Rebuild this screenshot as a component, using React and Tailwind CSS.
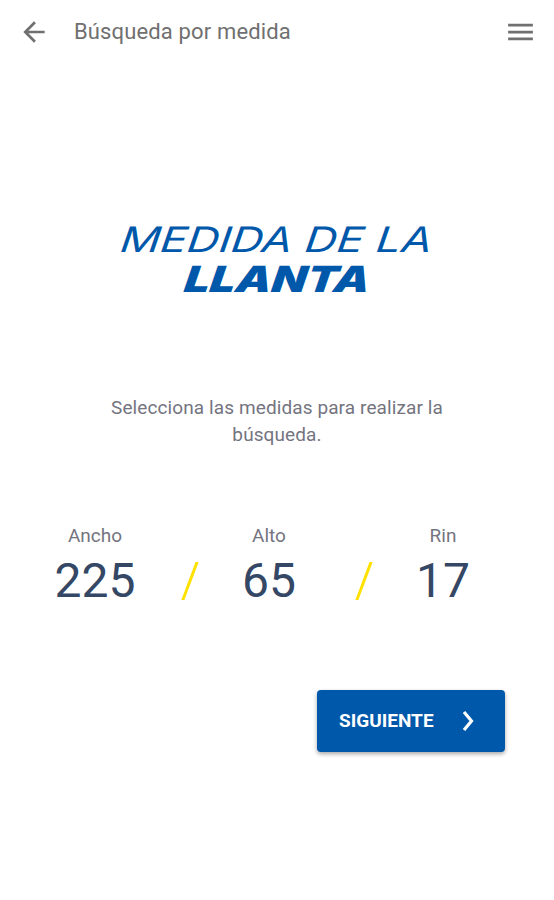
import React from 'react';

const measures = [
  { label: 'Ancho', value: '225' },
  { label: 'Alto', value: '65' },
  { label: 'Rin', value: '17' },
];

function Header() {
  return (
    <header className="h-16 pl-[18px] pr-[17px] flex items-center justify-between text-[#707070]">
      <div className="flex items-center">
        <button aria-label="Regresar">
          <svg className="w-8 h-8" viewBox="0 0 24 24" fill="currentColor">
            <path d="M20 11H7.83l5.59-5.59L12 4l-8 8 8 8 1.41-1.41L7.83 13H20v-2z" />
          </svg>
        </button>
        <span className="ml-6 text-[22px] leading-8 tracking-[0.14px] whitespace-nowrap">Búsqueda por medida</span>
      </div>
      <button aria-label="Menú">
        <svg className="w-[33px] h-[34px]" viewBox="0 0 24 24" fill="currentColor">
          <path d="M3 18h18v-2H3v2zm0-5h18v-2H3v2zm0-7v2h18V6H3z" />
        </svg>
      </button>
    </header>
  );
}

function Slash() {
  return (
    <svg className="w-[18px] h-[38px] mt-[38px] -mr-2 ml-2" viewBox="0 0 18 38">
      <path d="M14.5 0h3.2L3.4 38H0.3z" fill="#ffe100" />
    </svg>
  );
}

function Measure({ label, value }) {
  return (
    <div className="w-24 flex flex-col items-center">
      <span className="text-[19px] leading-6 text-[#747480]">{label}</span>
      <span className="mt-[5px] text-[48px] leading-[56px] text-[#344765]">{value}</span>
    </div>
  );
}

function App() {
  return (
    <div className="w-full h-[900px] bg-white font-['Roboto',sans-serif] overflow-hidden">
      <Header />

      <h1 className="mt-[155px] flex flex-col items-center font-['Inter',sans-serif] italic text-[#0058aa] whitespace-nowrap">
        <span className="text-[35px] leading-10 font-normal -skew-x-6 scale-x-[1.27]">MEDIDA DE LA</span>
        <span className="ml-0.5 text-[36px] leading-10 font-black -skew-x-6 scale-x-[1.26]">LLANTA</span>
      </h1>

      <p className="mt-[95px] w-[360px] mx-auto text-center text-[19px] leading-[27px] tracking-[0.1px] text-[#747480]">
        Selecciona las medidas para realizar la búsqueda.
      </p>

      <div className="mt-[76px] pl-[47px] pr-[63px] flex items-start justify-between">
        <Measure {...measures[0]} />
        <Slash />
        <Measure {...measures[1]} />
        <Slash />
        <Measure {...measures[2]} />
      </div>

      <div className="mt-[81px] pr-[49px] flex justify-end">
        <button className="w-[188px] h-[62px] pl-[22px] rounded bg-[#0058aa] text-white flex items-center shadow-[0_2px_4px_rgba(0,0,0,0.35)]">
          <span className="w-[96px] text-left text-[19px] leading-6 font-bold whitespace-nowrap">SIGUIENTE</span>
          <svg className="ml-[27px] w-3 h-[22px]" viewBox="0 0 12 22" fill="none" stroke="currentColor" strokeWidth="3.2">
            <path d="M2 2l7.5 9L2 20" />
          </svg>
        </button>
      </div>
    </div>
  );
}

export default App;
